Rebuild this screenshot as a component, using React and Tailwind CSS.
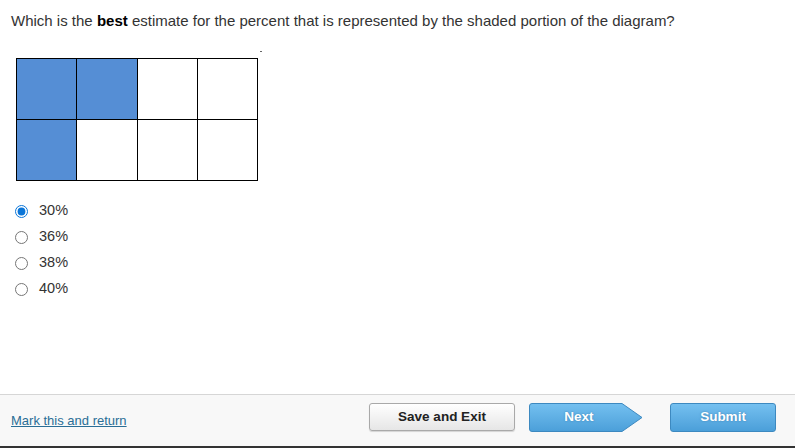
import React, { useState } from 'react';

const options = ['30%', '36%', '38%', '40%'];
const shaded = [true, true, false, false, true, false, false, false];

const App = () => {
  const [choice, setChoice] = useState('30%');

  return (
    <div className="h-[448px] w-[795px] flex flex-col bg-white font-['Liberation_Sans',Arial,sans-serif] text-[#333]">
      <div className="flex-1 px-[11px] pt-[12px]">
        <p className="text-[15px] leading-[18px]">
          Which is the <b className="text-black">best</b> estimate for the percent that is represented by the shaded portion of the diagram?
        </p>

        <div className="relative mt-[28px] ml-[5px] w-[242px]">
          <div className="grid grid-cols-4 border-l border-t border-black w-[242px]">
            {shaded.map((s, i) => (
              <div
                key={i}
                className={`h-[61px] border-r border-b border-black ${s ? 'bg-[#558ed5]' : 'bg-white'}`}
              />
            ))}
          </div>
          <span className="absolute right-[-4px] top-[-7px] w-[2px] h-px bg-[#666]" />
        </div>

        <div className="mt-[20px] flex flex-col gap-[6px] ml-[4px]">
          {options.map((o) => (
            <label key={o} className="flex items-center h-[20px] text-[14.5px] text-[#333] cursor-pointer">
              <input
                type="radio"
                name="answer"
                checked={choice === o}
                onChange={() => setChoice(o)}
                className="w-[13px] h-[13px] m-0 accent-[#0a75d8]"
              />
              <span className="ml-[11px]">{o}</span>
            </label>
          ))}
        </div>
      </div>

      <div className="h-[54px] border-t border-[#d6d6d6] border-b-2 border-b-[#333] bg-[#f8f8f8] flex items-start pt-[8px] px-[11px]">
        <a href="#" className="text-[13px] text-[#2a6e96] underline mt-[8px]">Mark this and return</a>
        <div className="flex-1" />
        <button
          type="button"
          className="w-[146px] h-[28px] rounded-[3px] border border-[#a9a9a9] bg-gradient-to-b from-[#ffffff] to-[#e6e6e6] text-[13.5px] font-bold text-[#222] shadow-[0_1px_1px_rgba(0,0,0,0.15)]"
        >
          Save and Exit
        </button>
        <button type="button" className="relative ml-[14px] w-[114px] h-[29px] text-[13.5px] font-bold text-white">
          <svg className="absolute inset-0" width="114" height="29" viewBox="0 0 114 29">
            <defs>
              <linearGradient id="nx" x1="0" y1="0" x2="0" y2="1">
                <stop offset="0" stopColor="#74c0f0" />
                <stop offset="1" stopColor="#4b9fd9" />
              </linearGradient>
            </defs>
            <path d="M3 0.5 H93 L113 14.5 L93 28.5 H3 Q0.5 28.5 0.5 26 V3 Q0.5 0.5 3 0.5 Z" fill="url(#nx)" stroke="#3d89c0" />
          </svg>
          <span className="relative pr-[14px] [text-shadow:0_0_2px_#3a7fb0]">Next</span>
        </button>
        <button
          type="button"
          className="ml-[27px] mr-[8px] w-[106px] h-[29px] rounded-[3px] border border-[#3d89c0] bg-gradient-to-b from-[#74c0f0] to-[#4b9fd9] text-[13.5px] font-bold text-white [text-shadow:0_0_2px_#3a7fb0]"
        >
          Submit
        </button>
      </div>
    </div>
  );
};

export default App;
